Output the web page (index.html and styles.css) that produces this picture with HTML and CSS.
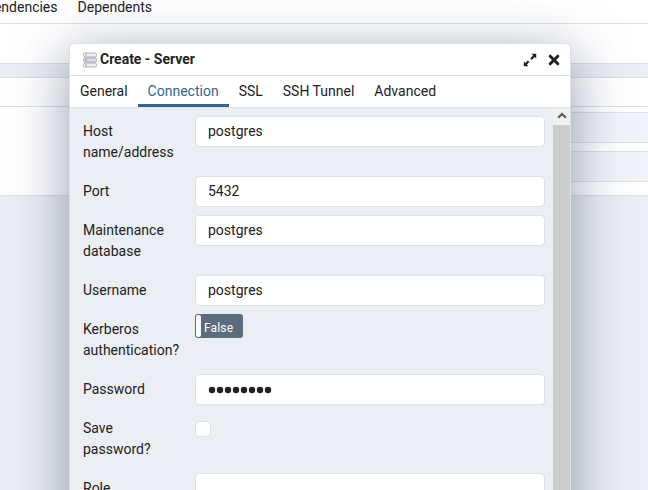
FILE: index.html
```
<!DOCTYPE html>
<html lang="en">
<head>
<meta charset="utf-8">
<title>Create - Server</title>
<link rel="stylesheet" href="styles.css">
</head>
<body>
<div class="page">
  <nav class="page-tabs"><span>Dependencies</span><span>Dependents</span></nav>
  <div class="page-toolbar"></div>
  <div class="page-gap"></div>
  <div class="grid-header"></div>
  <div class="grid-body">
    <div class="grid-row"></div>
    <div class="grid-row"></div>
  </div>
</div>

<section class="dialog">
  <header class="dialog-header">
    <svg class="server-icon" viewBox="0 0 14 16" width="14" height="16">
      <g fill="#f0f0f0" stroke="#b0b0b0">
        <rect x=".5" y="1" width="13" height="4" rx="1.5"/>
        <rect x=".5" y="11" width="13" height="4" rx="1.5"/>
      </g>
      <rect x=".5" y="6" width="13" height="4" rx="1.5" fill="#dcdce8" stroke="#a4a4b8"/>
      <path d="M2 3h2M2 13h2" stroke="#aaa"/>
      <path d="M2 8h2" stroke="#8c8ca2"/>
    </svg>
    <h1>Create - Server</h1>
    <svg class="expand-icon" viewBox="0 0 14 14" width="14" height="14">
      <path d="M8.6 .8h4.6v4.6l-1.5-1.4-2.9 2.9-1.6-1.6 2.9-2.9zM5.4 13.2H.8V8.6l1.5 1.4 2.5-2.5 1.6 1.6-2.5 2.5z" fill="#222"/>
    </svg>
    <svg class="close-icon" viewBox="0 0 12 12" width="12" height="12">
      <path d="M2.2 2.2l7.6 7.6M9.8 2.2l-7.6 7.6" stroke="#222" stroke-width="3" stroke-linecap="round"/>
    </svg>
  </header>
  <nav class="tabs">
    <a>General</a><a class="active">Connection</a><a>SSL</a><a>SSH Tunnel</a><a>Advanced</a>
  </nav>
  <div class="dialog-body">
    <form class="form">
      <div class="row"><label>Host name/address</label><div class="input">postgres</div></div>
      <div class="row"><label>Port</label><div class="input">5432</div></div>
      <div class="row"><label>Maintenance database</label><div class="input">postgres</div></div>
      <div class="row"><label>Username</label><div class="input">postgres</div></div>
      <div class="row"><label>Kerberos authentication?</label><div class="toggle"><i></i><span>False</span></div></div>
      <div class="row"><label>Password</label><div class="input">
        <svg class="dots" viewBox="0 0 64 8" width="64" height="8" fill="#222"><circle cx="4" cy="4" r="3.2"/><circle cx="12" cy="4" r="3.2"/><circle cx="20" cy="4" r="3.2"/><circle cx="28" cy="4" r="3.2"/><circle cx="36" cy="4" r="3.2"/><circle cx="44" cy="4" r="3.2"/><circle cx="52" cy="4" r="3.2"/><circle cx="60" cy="4" r="3.2"/></svg>
      </div></div>
      <div class="row"><label>Save password?</label><div class="checkbox"></div></div>
      <div class="row"><label>Role</label><div class="input"></div></div>
    </form>
    <div class="scrollbar">
      <div class="scroll-up"><svg viewBox="0 0 10 7" width="10" height="7"><path d="M1.2 5.8L5 2l3.8 3.8" fill="none" stroke="#555" stroke-width="2"/></svg></div>
      <div class="scroll-thumb"></div>
    </div>
  </div>
</section>
</body>
</html>
```

FILE: styles.css
```
* { box-sizing: border-box; }
body {
  margin: 0;
  height: 490px;
  overflow: hidden;
  position: relative;
  background: #ebeef3;
  color: #222;
  font: 14px/21px Roboto, sans-serif;
}

.page { background: #fff; }
.page-tabs {
  display: flex;
  justify-content: flex-end;
  gap: 20px;
  width: 152px;
  height: 23px;
  line-height: 14px;
}
.page-toolbar { height: 41px; border: solid #dde0e6; border-width: 1px 0; }
.page-gap { height: 13px; background: #ebeef3; }
.grid-header { height: 30px; border: solid #dde0e6; border-width: 1px 0; }
.grid-body {
  display: flex;
  flex-direction: column;
  gap: 8px;
  height: 89px;
  padding: 5px 0 0 300px;
  border-bottom: 1px solid #dde0e6;
}
.grid-row { height: 31px; background: #f3f4f9; border: 1px solid #dde0e6; border-right: 0; }

.dialog {
  position: absolute;
  left: 69px;
  top: 43px;
  width: 502px;
  height: 560px;
  display: flex;
  flex-direction: column;
  border: 1px solid #dde0e6;
  border-radius: 4px;
  background: #fff;
  box-shadow: 0 12px 56px rgba(76, 88, 118, .6);
}
.dialog-header {
  display: flex;
  align-items: center;
  height: 32px;
  padding: 0 10px 0 13px;
  border-bottom: 1px solid #dde0e6;
}
.dialog-header h1 {
  flex: 1;
  margin: 0 0 0 3px;
  font-size: 14px;
  font-weight: 700;
  letter-spacing: -.02px;
}
.expand-icon { margin-right: 11px; }
.tabs { display: flex; height: 32px; border-bottom: 1px solid #dde0e6; }
.tabs a { padding: 5px 10px 0; height: 31px; }
.tabs .active { color: #326690; border-bottom: 3px solid #326690; }

.dialog-body { display: flex; flex: 1; background: #ebeef3; border-radius: 0 0 4px 4px; }
.form { flex: 1; display: flex; flex-direction: column; gap: 8px; padding: 8px 8px 0 13px; }
.row { display: flex; align-items: flex-start; }
.row label { width: 112px; padding: 5px 14px 5px 0; }
.input {
  width: 350px;
  height: 31px;
  padding: 4px 12px;
  border: 1px solid #dde0e6;
  border-radius: 4px;
  background: #fff;
}
.dots { display: block; margin-top: 7px; }
.toggle {
  display: flex;
  width: 48px;
  height: 24px;
  padding: 1px;
  border-radius: 3px;
  background: #5b6d7c;
  color: #fff;
  font-size: 12px;
  line-height: 26px;
}
.toggle i { width: 5px; border-radius: 2px; background: #f9f9f9; }
.toggle span { margin-left: 3px; letter-spacing: .15px; }
.checkbox {
  width: 16px;
  height: 16px;
  margin-top: 8px;
  border: 1px solid #dde0e6;
  border-radius: 4px;
  background: #fff;
}
.scrollbar { width: 17px; background: #f0f0f0; display: flex; flex-direction: column; }
.scroll-up { height: 17px; display: flex; align-items: center; justify-content: center; padding-bottom: 2px; }
.scroll-thumb { flex: 1; background: #cdcdcd; }
```
